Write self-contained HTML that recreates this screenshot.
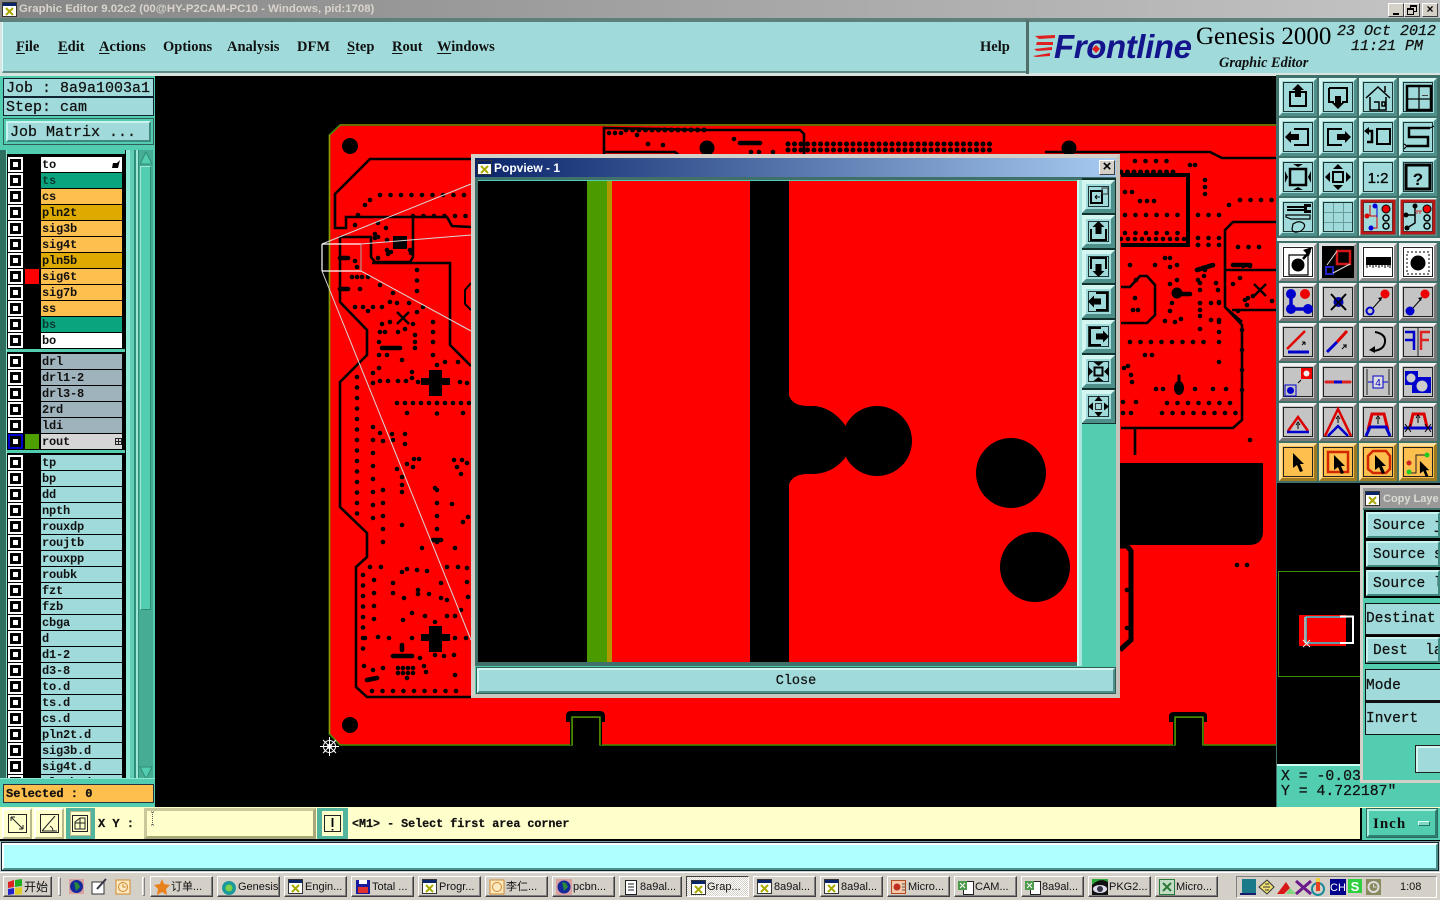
<!DOCTYPE html>
<html lang="en"><head><meta charset="utf-8"><title>Graphic Editor</title>
<style>
html,body{margin:0;padding:0;background:#000;width:1440px;height:900px;overflow:hidden}
body{position:relative;font-family:"Liberation Sans","Noto Sans CJK SC",sans-serif}
.a,.a *{box-sizing:border-box}
.a{position:absolute}
.mono{font-family:"Liberation Mono",monospace;-webkit-text-stroke:.25px}
.menu{position:absolute;top:39px;font:bold 14.500px "Liberation Serif",serif;color:#111;white-space:pre}
.menu u{text-decoration-thickness:1px;text-underline-offset:2px}
.r{position:absolute;left:8px;width:115px;height:15px}
.r i{position:absolute;left:2px;top:2px;width:11px;height:11px;border:3px solid #000;background:#fff;outline:2px solid #fff;box-sizing:border-box}
.r s{position:absolute;left:17px;top:0;width:14px;height:15px;text-decoration:none}
.r b{position:absolute;left:33px;top:0;width:81px;height:15px;box-sizing:border-box;padding-left:1px;font:bold 12px/16px "Liberation Mono",monospace;letter-spacing:-.2px;color:#111;overflow:hidden;white-space:pre}
.y{background:#fdbf4d}.g{background:#deaa00}.e{background:#0aa57f;color:#0b3b30!important}.w{background:#fff}.q{background:#9fb3bd}.t2{background:#a0dada}
.bev{border:2px solid;border-color:#c9f3ee #3f8a80 #3f8a80 #c9f3ee}
.tb{position:absolute;top:876px;width:63px;height:21px;box-sizing:border-box;background:#d4d0c8;border:1px solid;border-color:#fff #404040 #404040 #fff;box-shadow:inset -1px -1px 0 #808080;font-size:11px;line-height:20px;color:#111;white-space:nowrap;overflow:hidden;padding-left:20px}
.tb svg{position:absolute;left:3px;top:2px}
.cp{position:absolute;left:1366px;width:74px;box-sizing:border-box;background:#a0dada;font:14.500px "Liberation Mono",monospace;-webkit-text-stroke:.25px;color:#111;white-space:pre;overflow:hidden}
.d{fill:none;stroke:#000;stroke-linecap:round;stroke-width:4.600;stroke-dasharray:0 10.5}
.t{fill:none;stroke:#000;stroke-width:2.600}
.p{fill:none;stroke:#000;stroke-linecap:round;stroke-width:4.600}
.k{fill:none;stroke:#000;stroke-width:2}
.k1{fill:none;stroke:#000;stroke-width:1.200}
.ol{fill:none;stroke:#d8d8d8;stroke-width:1}
</style></head><body>

<svg width="0" height="0" style="position:absolute">
<defs>
<symbol id="bt" viewBox="0 0 38 38"><rect width="38" height="38" fill="#a0dada"/><path d="M0 0h38l-3 3H3v32l-3 3z" fill="#d4f6f1"/><path d="M38 38H0l3-3h32V3l3-3z" fill="#4f8f8a"/><rect x="4.500" y="4.500" width="29" height="29" fill="none" stroke="#1c3432"/></symbol>
<symbol id="bg" viewBox="0 0 38 38"><rect width="38" height="38" fill="#c4c4c4"/><path d="M0 0h38l-3 3H3v32l-3 3z" fill="#f0f0f0"/><path d="M38 38H0l3-3h32V3l3-3z" fill="#777"/><rect x="4.500" y="4.500" width="29" height="29" fill="none" stroke="#222"/></symbol>
<symbol id="bw" viewBox="0 0 38 38"><rect width="38" height="38" fill="#fff"/><path d="M38 38H0l3-3h32V3l3-3z" fill="#8a8a8a"/><path d="M0 0h38l-3 3H3v32l-3 3z" fill="#eee"/><rect x="4.500" y="4.500" width="29" height="29" fill="none" stroke="#222"/></symbol>
<symbol id="by" viewBox="0 0 38 38"><rect width="38" height="38" fill="#fdbf4d"/><path d="M0 0h38l-3 3H3v32l-3 3z" fill="#ffe09c"/><path d="M38 38H0l3-3h32V3l3-3z" fill="#a07a20"/><rect x="4.500" y="4.500" width="29" height="29" fill="none" stroke="#222"/></symbol>
<symbol id="pb" viewBox="0 0 33 33"><rect width="33" height="33" fill="#a0dada"/><path d="M0 0h33l-4 4H4v25l-4 4z" fill="#d4f6f1"/><path d="M33 33H0l4-4h25V4l4-4z" fill="#4f8f8a"/><rect x="6.500" y="6.500" width="20" height="20" fill="none" stroke="#1c3432"/></symbol>
<symbol id="xw" viewBox="0 0 15 15"><rect x=".5" y=".5" width="14" height="14" fill="#fff" stroke="#333"/><rect x="1" y="1" width="13" height="3" fill="#0a246a"/><path d="M4 6l7 7M11 6l-7 7" stroke="#a9a900" stroke-width="2"/></symbol>
<symbol id="pt" viewBox="0 0 14 20"><path d="M1 1l11 11H8l3 7-3 1-3-7-4 3z" fill="#000"/></symbol>
</defs>
</svg>

<!-- PCB canvas -->
<svg class="a" style="left:0;top:0" width="1440" height="900" viewBox="0 0 1440 900">
<rect width="1440" height="900" fill="#000"/>
<path d="M340 124H1276V745H340L329 734V135z" fill="#ff0000"/>
<path d="M1276 125H340L329.500 135V734L340 745H572V717H600V745H1175V717H1203V745H1276" fill="none" stroke="#3f8f00" stroke-width="1.600"/>
<path d="M329.500 135V734" stroke="#8f9a00" stroke-width="1.400"/>
<!-- notches -->
<path d="M566 716q0-5 5-5h29q5 0 5 5v6h-3V745h-2V717H572V745h-2V722h-4z" fill="#000"/>
<rect x="573" y="718" width="26" height="27" fill="#000"/>
<path d="M1169 716q0-4 5-4h29q4 0 4 4v6h-3V745h-1V717h-28V745h-2V722h-4z" fill="#000"/>
<rect x="1176" y="718" width="26" height="27" fill="#000"/>
<path d="M1203 745V717H1175V745" fill="none" stroke="#3f8f00" stroke-width="1.600"/>
<path d="M600 745V717H572V745" fill="none" stroke="#3f8f00" stroke-width="1.600"/>
<!-- holes -->
<circle cx="350" cy="146" r="8"/><circle cx="350" cy="725" r="8"/><circle cx="707" cy="148" r="7.500"/><circle cx="1069" cy="148" r="7.500"/>
<!-- big cutout -->
<path d="M1119 463H1263V531q0 14-14 14H1119z" fill="#000"/>
<!-- traces left -->
<path class="t" d="M471 159H370L335 194V228H346V217H447L452 226L471 227"/>
<path class="t" d="M413 217V257L410 262H375L371 257V237H340V302L367 330V355L340 382V507L367 533V557L356 567V687L367 697H471"/>
<path class="t" d="M372 263H450V345L471 366"/>
<path class="t" d="M604 154V128L708 130H800L804 134V154"/>
<path class="t" d="M604 152H675L680 156"/>
<path class="t" d="M1045 152H1210L1222 158H1276"/>
<path class="t" style="stroke-width:2" d="M471 283L465 290V304L471 310"/>
<!-- traces right -->
<path class="t" style="stroke-width:4" d="M1121 175H1188V245H1121"/>
<path class="t" d="M1121 287H1130L1140 276H1147L1155 285V315L1147 323H1121"/>
<path class="t" d="M1276 222H1233L1225 230V307L1242 325V420L1233 428H1121"/>
<path class="t" d="M1225 270H1276M1227 309L1242 322M1135 428V455"/>
<path class="t" style="stroke-width:5" d="M1120 546H1127L1131 551V640L1120 650"/>
<path class="t" d="M1276 310H1232"/>
<!-- pads -->
<rect x="393" y="236" width="14" height="13"/>
<path d="M429 370h13v8h8v7h-8v11h-13v-11h-8v-7h8z"/>
<path d="M429 626h13v8h8v7h-8v11h-13v-11h-8v-7h8z"/>
<circle cx="1177" cy="293" r="5.500"/><path class="p" d="M1180 294H1190"/>
<ellipse cx="1179" cy="388" rx="5" ry="7"/><path class="p" style="stroke-width:3" d="M1179 376V384"/>
<path d="M397 312l12 12M409 312l-12 12M1254 284l12 12M1266 284l-12 12" stroke="#000" stroke-width="2.400"/>
<!-- dotted lines -->
<path class="d" d="M380 195H470M413 216H470M417 270V292M357 377V520M437 403V420M363 575V653M372 691H465"/>
<path class="d" style="stroke-dasharray:0 13" d="M373 427V520M383 490V553M374 580V630M437 490V548"/>
<path class="d" style="stroke-dasharray:0 8" d="M397 403H470"/>
<path class="d" style="stroke-dasharray:0 6.500;stroke-width:5" d="M788 144H990M788 150H990M626 130H705M1121 172H1176"/>
<path class="d" d="M1135 161H1176M1125 215H1178M1125 233H1178M1198 215H1220M1198 238H1226M1198 245H1226M1130 342H1204M1167 403H1231M1162 413H1236M1240 200H1272M1238 247H1265"/>
<path class="d" style="stroke-dasharray:0 7;stroke-width:4.600" d="M1121 239H1186M1205 180V197M1140 201H1158M1145 355H1158M1243 266H1256"/>
<path class="d" style="stroke-dasharray:0 20" d="M1219 302V370M1200 290V330M1242 330V410"/>
<path class="d" style="stroke-dasharray:0 13" d="M1213 389H1236"/>
<path class="p" d="M340 258H348M340 289H348M382 348H400M433 540H441M393 656H412M402 645V650M367 680L377 678M740 143H760M1197 270L1213 265M1233 265H1250"/>
<path class="p" d="M355 225h0M358 215h0M378 223h0M386 228h0M375 234h0M375 238h0M378 237h0M387 240h0M387 250h0M388 254h0M391 252h0M378 258h0M411 253h0M410 250h0M355 261h0M357 267h0M352 277h0M357 277h0M362 277h0M368 277h0M360 289h0M380 285h0M393 293h0M355 307h0M363 307h0M368 311h0M373 307h0M382 307h0M390 302h0M397 303h0M409 303h0M417 312h0M423 307h0M382 324h0M390 322h0M413 324h0M433 322h0M433 332h0M433 342h0M433 355h0M415 335h0M415 342h0M415 348h0M380 332h0M385 332h0M398 332h0M405 329h0M379 342h0M379 355h0M387 355h0M402 360h0M379 368h0M373 373h0M373 383h0M380 381h0M388 381h0M398 381h0M406 381h0M412 372h0M412 378h0M418 382h0M445 362h0M458 362h0M437 365h0M460 382h0M467 383h0M407 413h0M463 413h0M380 433h0M392 434h0M405 434h0M383 441h0M405 444h0M393 440h0M414 459h0M419 459h0M407 464h0M413 467h0M397 469h0M402 477h0M402 485h0M402 492h0M435 488h0M452 504h0M454 460h0M462 460h0M467 463h0M457 467h0M461 474h0M463 522h0M468 517h0M455 548h0M422 548h0M402 525h0M370 567h0M381 567h0M402 572h0M407 569h0M417 570h0M427 571h0M447 567h0M458 567h0M467 568h0M393 583h0M393 593h0M404 598h0M418 590h0M418 594h0M429 594h0M441 598h0M447 600h0M441 583h0M467 582h0M468 597h0M461 610h0M447 616h0M455 616h0M425 616h0M412 613h0M403 620h0M435 622h0M455 638h0M466 638h0M412 638h0M389 638h0M378 637h0M365 638h0M435 655h0M444 656h0M454 655h0M420 658h0M424 666h0M426 672h0M455 675h0M364 666h0M383 668h0M373 670h0M398 668h0M403 668h0M408 668h0M413 668h0M398 673h0M403 673h0M408 673h0M413 673h0M407 678h0M370 200h0M365 205h0M609 133h0M615 133h0M621 133h0M637 135h0M648 144h0M663 145h0M734 139h0M751 152h0M759 152h0M773 152h0M1125 192h0M1132 192h0M1190 165h0M1195 165h0M1229 205h0M1198 245h0M1155 265h0M1165 258h0M1170 258h0M1130 265h0M1170 267h0M1177 265h0M1136 280h0M1135 298h0M1133 310h0M1138 310h0M1170 284h0M1177 280h0M1172 303h0M1170 311h0M1165 321h0M1175 322h0M1181 319h0M1198 280h0M1205 270h0M1204 276h0M1200 283h0M1216 283h0M1218 290h0M1200 303h0M1211 303h0M1219 303h0M1200 316h0M1211 320h0M1219 320h0M1200 329h0M1219 332h0M1233 284h0M1240 278h0M1245 300h0M1248 298h0M1253 296h0M1247 305h0M1272 301h0M1238 311h0M1124 368h0M1128 366h0M1131 375h0M1132 382h0M1163 389h0M1156 389h0M1195 389h0M1123 402h0M1136 402h0M1123 413h0M1131 413h0M1237 565h0M1247 565h0M1250 440h0M1127 590h0M1127 628h0"/>
<!-- overlay lines -->
<path class="ol" d="M322 244L471 184M361 244L471 235M361 271L471 331M322 271L471 640"/>
<path d="M322 244H361M322 271H361M322 244V271" fill="none" stroke="#fff" stroke-width="1.200"/>
<path d="M361 244V271" fill="none" stroke="#aaa"/>
<!-- crosshair cursor -->
<g stroke="#fff" fill="none"><circle cx="329.500" cy="746.500" r="6"/><circle cx="329.500" cy="746.500" r="2"/><path d="M329.500 737V756M320 746.500H339M323 740L336 753M336 740L323 753"/></g>
<!-- minimap -->
<rect x="1277" y="483" width="84" height="281" fill="#000"/>
<path d="M1361 571.500H1278.500V676.500H1361" fill="none" stroke="#3f8f00"/>
<rect x="1299" y="615" width="47" height="31" fill="#f00"/>
<path d="M1347 617H1306V643H1347" fill="none" stroke="#30d0e0" stroke-width="1.600"/>
<path d="M1340 616.500H1353V643H1340" fill="none" stroke="#fff" stroke-width="2"/>
<path d="M1305 617V643" stroke="#aaa" stroke-width="2"/>
<path d="M1303 640l7 7M1310 640l-7 7" stroke="#eee"/>
</svg>

<!-- title bar -->
<div class="a" style="left:0;top:0;width:1440px;height:18px;background:linear-gradient(90deg,#868686,#c4c4c4)"></div>
<svg class="a" style="left:2px;top:2px" width="15" height="15"><use href="#xw"/></svg>
<div class="a" style="left:19px;top:2px;font:bold 11.400px/15px 'Liberation Sans',sans-serif;color:#d8d4cc;white-space:pre">Graphic Editor 9.02c2 (00@HY-P2CAM-PC10 - Windows, pid:1708)</div>
<div class="a" style="left:1388px;top:3px;width:16px;height:14px;background:#d4d0c8;border:1px solid;border-color:#fff #404040 #404040 #fff"><div class="a" style="left:4px;top:9px;width:6px;height:2px;background:#000"></div></div>
<div class="a" style="left:1404px;top:3px;width:16px;height:14px;background:#d4d0c8;border:1px solid;border-color:#fff #404040 #404040 #fff"><div class="a" style="left:5px;top:1px;width:7px;height:7px;border:1px solid #000;border-top-width:2px"></div><div class="a" style="left:2px;top:4px;width:7px;height:7px;border:1px solid #000;border-top-width:2px;background:#d4d0c8"></div></div>
<div class="a" style="left:1422px;top:3px;width:16px;height:14px;background:#d4d0c8;border:1px solid;border-color:#fff #404040 #404040 #fff;font:bold 12px/11px 'Liberation Sans';text-align:center;color:#000">×</div>

<!-- menu bar -->
<div class="a" style="left:0;top:18px;width:1440px;height:58px;background:#d8e4e0"></div>
<div class="a" style="left:0;top:18px;width:1440px;height:4px;background:#5f7f7a"></div>
<div class="a" style="left:2px;top:22px;width:1024px;height:51px;background:#a0dada;border-bottom:2px solid #5f8a88;border-left:1px solid #dff"></div>
<div class="a" style="left:1026px;top:20px;width:3px;height:54px;background:#4f6f6a"></div>
<div class="a" style="left:1029px;top:22px;width:411px;height:51px;background:#a0dada"></div>
<span class="menu" style="left:16px"><u>F</u>ile</span>
<span class="menu" style="left:58px"><u>E</u>dit</span>
<span class="menu" style="left:99px"><u>A</u>ctions</span>
<span class="menu" style="left:163px">Options</span>
<span class="menu" style="left:227px">Analysis</span>
<span class="menu" style="left:297px">DFM</span>
<span class="menu" style="left:347px"><u>S</u>tep</span>
<span class="menu" style="left:392px"><u>R</u>out</span>
<span class="menu" style="left:437px"><u>W</u>indows</span>
<span class="menu" style="left:980px">Help</span>
<!-- logo -->
<svg class="a" style="left:1030px;top:30px" width="30" height="30"><path d="M5 6L25 5V8L9 9zM7 12H23V15H6zM4 19L22 17V20L7 21zM3 26L20 23V26L6 27z" fill="#e02020"/></svg>
<div class="a" style="left:1054px;top:29px;font:italic bold 33px/36px 'Liberation Sans',sans-serif;letter-spacing:-.4px;color:#14148c;white-space:pre">Frontline</div>
<svg class="a" style="left:1091px;top:44px" width="10" height="10"><path d="M5 1l4 4-4 4-4-4z" fill="#e02020"/></svg>
<div class="a" style="left:1196px;top:22px;font:25px/30px 'Liberation Serif',serif;color:#000;white-space:pre">Genesis 2000</div>
<div class="a" style="left:1219px;top:55px;font:italic bold 14.300px/16px 'Liberation Serif',serif;color:#111;white-space:pre">Graphic Editor</div>
<div class="a mono" style="left:1337px;top:23px;font:italic 15px/17px 'Liberation Mono',monospace;color:#111;white-space:pre">23 Oct 2012</div>
<div class="a mono" style="left:1351px;top:38px;font:italic 15px/17px 'Liberation Mono',monospace;color:#111;white-space:pre">11:21 PM</div>

<!-- left panel -->
<div class="a" style="left:0;top:76px;width:155px;height:731px;background:#52cdb0"></div>
<div class="a mono" style="left:3px;top:78px;width:151px;height:19px;background:#a0dada;border:1px solid #123;font-size:15px;line-height:19px;padding-left:2px;color:#111;white-space:pre">Job : 8a9a1003a1</div>
<div class="a mono" style="left:3px;top:97px;width:151px;height:19px;background:#a0dada;border:1px solid #123;font-size:15px;line-height:19px;padding-left:2px;color:#111;white-space:pre">Step: cam</div>
<div class="a" style="left:3px;top:118px;width:151px;height:27px;border:1px solid #2f5f58;padding:2px"><div class="bev mono" style="height:21px;background:#a0dada;font-size:15px;line-height:19px;padding-left:2px;color:#111;white-space:pre">Job Matrix ...</div></div>
<!-- list frame -->
<div class="a" style="left:0;top:150px;width:6px;height:632px;background:#2f6f62"></div>
<div class="a" style="left:6px;top:150px;width:1px;height:632px;background:#8fe0cf"></div>
<div class="a" style="left:7px;top:154px;width:118px;height:625px;background:#000;overflow:hidden"></div>
<div class="a" style="left:125px;top:150px;width:13px;height:630px;background:linear-gradient(90deg,#000 0 1px,#8fe8d4 1px 5px,#60cdb4 5px 9px,#2e8f76 9px 11px,#9fe8d8 11px 13px)"></div>
<div class="a" style="left:138px;top:150px;width:15px;height:630px;background:#46ad93;border-left:1px solid #2e8f76"></div>
<div class="a" style="left:140px;top:166px;width:11px;height:444px;background:#52cdb0;border:1px solid;border-color:#9fe8d8 #2e8f76 #2e8f76 #9fe8d8"></div>
<svg class="a" style="left:139px;top:151px" width="14" height="14"><path d="M7 1L13 13H1z" fill="#52cdb0" stroke="#2e8f76"/></svg>
<svg class="a" style="left:139px;top:766px" width="14" height="14"><path d="M7 13L13 1H1z" fill="#52cdb0" stroke="#2e8f76"/></svg>
<div class="a" style="left:7px;top:349px;width:118px;height:3px;background:#52cdb0"></div>
<div class="a" style="left:7px;top:450px;width:118px;height:3px;background:#52cdb0"></div>

<div class="r" style="top:157px"><i></i><b class="w">to</b><svg class="a" style="left:104px;top:3px" width="9" height="9"><path d="M8 0L5 3H1L0 8H6z" fill="#000"/></svg></div>
<div class="r" style="top:173px"><i></i><b class="e">ts</b></div>
<div class="r" style="top:189px"><i></i><b class="y">cs</b></div>
<div class="r" style="top:205px"><i></i><b class="g">pln2t</b></div>
<div class="r" style="top:221px"><i></i><b class="y">sig3b</b></div>
<div class="r" style="top:237px"><i></i><b class="y">sig4t</b></div>
<div class="r" style="top:253px"><i></i><b class="g">pln5b</b></div>
<div class="r" style="top:269px"><i></i><s style="background:#f00"></s><b class="y">sig6t</b></div>
<div class="r" style="top:285px"><i></i><b class="y">sig7b</b></div>
<div class="r" style="top:301px"><i></i><b class="y">ss</b></div>
<div class="r" style="top:317px"><i></i><b class="e">bs</b></div>
<div class="r" style="top:333px"><i></i><b class="w">bo</b></div>

<div class="r" style="top:354px"><i></i><b class="q">drl</b></div>
<div class="r" style="top:370px"><i></i><b class="q">drl1-2</b></div>
<div class="r" style="top:386px"><i></i><b class="q">drl3-8</b></div>
<div class="r" style="top:402px"><i></i><b class="q">2rd</b></div>
<div class="r" style="top:418px"><i></i><b class="q">ldi</b></div>
<div class="r" style="top:434px"><i style="outline-color:#00c;border-color:#000"></i><s style="background:#4ea000"></s><b style="background:#d6d6d6">rout</b><svg class="a" style="left:107px;top:4px" width="7" height="7"><path d="M.5.5h6v6h-6zM3.500.5v6M.5 3.500h6" fill="none" stroke="#222"/></svg></div>

<div class="r" style="top:455px"><i></i><b class="t2">tp</b></div>
<div class="r" style="top:471px"><i></i><b class="t2">bp</b></div>
<div class="r" style="top:487px"><i></i><b class="t2">dd</b></div>
<div class="r" style="top:503px"><i></i><b class="t2">npth</b></div>
<div class="r" style="top:519px"><i></i><b class="t2">rouxdp</b></div>
<div class="r" style="top:535px"><i></i><b class="t2">roujtb</b></div>
<div class="r" style="top:551px"><i></i><b class="t2">rouxpp</b></div>
<div class="r" style="top:567px"><i></i><b class="t2">roubk</b></div>
<div class="r" style="top:583px"><i></i><b class="t2">fzt</b></div>
<div class="r" style="top:599px"><i></i><b class="t2">fzb</b></div>
<div class="r" style="top:615px"><i></i><b class="t2">cbga</b></div>
<div class="r" style="top:631px"><i></i><b class="t2">d</b></div>
<div class="r" style="top:647px"><i></i><b class="t2">d1-2</b></div>
<div class="r" style="top:663px"><i></i><b class="t2">d3-8</b></div>
<div class="r" style="top:679px"><i></i><b class="t2">to.d</b></div>
<div class="r" style="top:695px"><i></i><b class="t2">ts.d</b></div>
<div class="r" style="top:711px"><i></i><b class="t2">cs.d</b></div>
<div class="r" style="top:727px"><i></i><b class="t2">pln2t.d</b></div>
<div class="r" style="top:743px"><i></i><b class="t2">sig3b.d</b></div>
<div class="r" style="top:759px"><i></i><b class="t2">sig4t.d</b></div>
<div class="r" style="top:775px;height:3px;overflow:hidden"><i></i><b class="t2">pln5b.d</b></div>
<div class="a" style="left:0;top:778px;width:155px;height:29px;background:#52cdb0;border-top:1px solid #8fe8d4"></div>
<div class="a mono" style="left:3px;top:784px;width:151px;height:19px;background:#fdbf4d;border:1px solid #234;font-weight:bold;font-size:12px;line-height:19px;padding-left:2px;color:#111;white-space:pre">Selected : 0</div>

<!-- right toolbars -->
<div class="a" style="left:1276px;top:75px;width:164px;height:408px;background:#40706a"></div>
<div class="a" style="left:1276px;top:238px;width:164px;height:3px;background:#e8f0ee"></div>
<svg class="a" style="left:0;top:0" width="1440" height="900" viewBox="0 0 1440 900">
<g font-family="Liberation Sans,sans-serif">
<!-- row1 -->
<g transform="translate(1279,78)"><use href="#bt" width="38" height="38"/><path class="k" d="M11 14H27V28H11z"/><path d="M19 6l6 6h-3v7h-6v-7h-3z"/></g>
<g transform="translate(1319,78)"><use href="#bt" width="38" height="38"/><path class="k" d="M10 10H28V24H23M15 24H10V10"/><path d="M16 18h6v7h3l-6 6-6-6h3z"/></g>
<g transform="translate(1359,78)"><use href="#bt" width="38" height="38"/><path class="k1" style="stroke-width:1.500" d="M7 20L19 9L31 20M11 19V32H27V19M15 24H20V32M23 24H26V28H23zM26 8V14"/></g>
<g transform="translate(1399,78)"><use href="#bt" width="38" height="38"/><path class="k" style="stroke-width:2.500" d="M8 8H32V32H8z"/><path class="k1" d="M8 21H32M20 8V32"/><path d="M23 17h6v1h-6z" fill="#444"/></g>
<!-- row2 -->
<g transform="translate(1279,118)"><use href="#bt" width="38" height="38"/><path class="k" d="M15 11H29V27H15"/><path d="M6 19l6-6v3h8v6h-8v3z"/></g>
<g transform="translate(1319,118)"><use href="#bt" width="38" height="38"/><path class="k" d="M23 11H9V27H23"/><path d="M32 19l-6-6v3h-8v6h8v3z"/></g>
<g transform="translate(1359,118)"><use href="#bt" width="38" height="38"/><path class="k" d="M18 11H31V26H18z"/><path class="k" style="stroke-width:2.500" d="M8 13H13V24H8"/><path d="M5 13l5-4v8z"/></g>
<g transform="translate(1399,118)"><use href="#bt" width="38" height="38"/><path class="k" style="stroke-width:2.500" d="M31 10H10V19H29V28H8"/><path class="k1" d="M31 10L35 8M8 28L5 26M8 28L5 31"/></g>
<!-- row3 -->
<g transform="translate(1279,158)"><use href="#bt" width="38" height="38"/><path class="k" style="stroke-width:2.500" d="M11 11H27V27H11z"/><path d="M19 9l-5-3h10zM19 29l-5 3h10zM9 19l-3-6v12zM29 19l3-6v12z"/></g>
<g transform="translate(1319,158)"><use href="#bt" width="38" height="38"/><path class="k" d="M14 14H24V24H14z"/><path d="M19 6l-5 5h10zM19 32l-5-5h10zM6 19l5-5v10zM32 19l-5-5v10z"/></g>
<g transform="translate(1359,158)"><use href="#bt" width="38" height="38"/><text x="19" y="25" text-anchor="middle" font-size="15" fill="#000" stroke="#000" stroke-width=".3">1:2</text></g>
<g transform="translate(1399,158)"><use href="#bt" width="38" height="38"/><path class="k" style="stroke-width:3" d="M7 7H31V31H7z"/><text x="19" y="27" text-anchor="middle" font-size="17" font-weight="bold" fill="#000">?</text></g>
<!-- row4 -->
<g transform="translate(1279,198)"><use href="#bt" width="38" height="38"/><path class="k" d="M8 9H25M8 12H25"/><path d="M25 6h7v3h-4v3h4v3h-7z"/><path class="k1" d="M7 17H31V21H12L7 19zM14 26q6-4 10-1t-2 8q-8 3-9-2z"/></g>
<g transform="translate(1319,198)"><use href="#bt" width="38" height="38"/><path d="M14.500 5V33M24.500 5V33M5 14.500H33M5 24.500H33" stroke="#6b9c9c" fill="none"/></g>
<g transform="translate(1359,198)"><use href="#bt" width="38" height="38"/><rect x="3" y="3" width="32" height="32" fill="none" stroke="#b81818" stroke-width="3"/><path d="M11 7V18M11 18H18V30H13" stroke="#d00" fill="none"/><path d="M18 19V8" stroke="#00d" fill="none"/><circle cx="8" cy="18" r="2.500" fill="#d00"/><circle cx="16" cy="8" r="2.500" fill="#00d"/><circle cx="12" cy="30" r="2.500" fill="#00d"/><circle cx="27" cy="11" r="4" fill="#e00" stroke="#000"/><circle cx="27" cy="20" r="3" fill="none" stroke="#000" stroke-width="1.500"/><circle cx="27" cy="28" r="3" fill="none" stroke="#000" stroke-width="1.500"/></g>
<g transform="translate(1399,198)"><use href="#bt" width="38" height="38"/><rect x="3" y="3" width="32" height="32" fill="none" stroke="#b81818" stroke-width="3"/><path d="M16 8V25L8 30M7 17H16" stroke="#000" fill="none" stroke-width="1.500"/><path d="M16 13H23M18 13v3M21 13v3" stroke="#c33" fill="none"/><circle cx="16" cy="8" r="2.500"/><circle cx="7" cy="17" r="2.500"/><circle cx="8" cy="30" r="2.500"/><circle cx="28" cy="11" r="4" fill="#e00" stroke="#000"/><circle cx="28" cy="20" r="3" fill="none" stroke="#000" stroke-width="1.500"/><circle cx="28" cy="28" r="3" fill="none" stroke="#000" stroke-width="1.500"/></g>
<!-- group 2 row 1 -->
<g transform="translate(1279,243)"><use href="#bw" width="38" height="38"/><path class="k1" d="M10 12H29V32H10z"/><circle cx="19" cy="22" r="6.500"/><path class="k" style="stroke-width:2.500" d="M24 16L31 8"/><path d="M33 4L24 7l6 6z"/></g>
<g transform="translate(1319,243)"><rect width="38" height="38" fill="#000"/><path d="M0 0h38l-3 3H3v32l-3 3z" fill="#ddd"/><path d="M38 38H0l3-3h32V3l3-3z" fill="#888"/><rect x="18" y="8" width="13" height="13" fill="none" stroke="#d21818" stroke-width="2.500"/><rect x="7" y="24" width="7" height="7" fill="none" stroke="#22c" stroke-width="2"/><path d="M8 22L18 8M14 30L31 21" stroke="#ddd"/></g>
<g transform="translate(1359,243)"><use href="#bw" width="38" height="38"/><rect x="7" y="14" width="25" height="8"/><path d="M8 22v3M11 22v2M14 22v3M17 22v2M20 22v3M23 22v2M26 22v3M29 22v2M31 22v3" stroke="#000"/></g>
<g transform="translate(1399,243)"><use href="#bw" width="38" height="38"/><path d="M8 9H30V31H8z" fill="none" stroke="#000" stroke-dasharray="2 2"/><circle cx="19" cy="20" r="7.500"/></g>
<!-- row 2 -->
<g transform="translate(1279,283)"><use href="#bg" width="38" height="38"/><path d="M12 11V26H29" stroke="#00c" stroke-width="3.500" fill="none"/><circle cx="12" cy="11" r="5" fill="#00c"/><circle cx="12" cy="26" r="5" fill="#00c"/><circle cx="29" cy="26" r="5" fill="#00c"/><circle cx="26" cy="11" r="5" fill="#e00"/></g>
<g transform="translate(1319,283)"><use href="#bg" width="38" height="38"/><path d="M12 11L27 27M27 11L12 27" stroke="#000" stroke-width="2"/><circle cx="19.500" cy="19" r="5" fill="#00a"/><path d="M15 15l9 9M24 15l-9 9" stroke="#000" stroke-width="1.500"/></g>
<g transform="translate(1359,283)"><use href="#bg" width="38" height="38"/><circle cx="11" cy="28" r="3.500" fill="none" stroke="#00c" stroke-width="2"/><circle cx="26" cy="11" r="4.500" fill="#e00"/><path d="M14 25L22 16" stroke="#000"/><path d="M23 14l-4 1 3 3z"/></g>
<g transform="translate(1399,283)"><use href="#bg" width="38" height="38"/><circle cx="11" cy="28" r="4.500" fill="#00c"/><circle cx="26" cy="11" r="4.500" fill="#e00"/><path d="M14 25L22 16" stroke="#000"/><path d="M23 14l-4 1 3 3z"/></g>
<!-- row 3 -->
<g transform="translate(1279,323)"><use href="#bg" width="38" height="38"/><path d="M8 26L26 8" stroke="#d00" stroke-width="2.500"/><path d="M9 29H30" stroke="#00c" stroke-width="3"/><path d="M23 22l3-3M26 19l-3 0M26 19l0 3" stroke="#000"/></g>
<g transform="translate(1319,323)"><use href="#bg" width="38" height="38"/><path d="M8 29L18 19" stroke="#00c" stroke-width="3"/><path d="M18 19L28 8" stroke="#d00" stroke-width="3"/><path d="M23 26l4-4-3 0M27 22l0 3" stroke="#000" fill="none"/></g>
<g transform="translate(1359,323)"><use href="#bg" width="38" height="38"/><path class="k" d="M16 9Q27 11 26 19T14 28"/><path d="M10 27l6-4v7z"/></g>
<g transform="translate(1399,323)"><use href="#bg" width="38" height="38"/><path d="M6 9H15V27M6 17H15" fill="none" stroke="#00c" stroke-width="2.500"/><path d="M31 9H22V27M22 17H30" fill="none" stroke="#d22" stroke-width="2.500"/><path d="M19 5V33" stroke="#222"/></g>
<!-- row 4 -->
<g transform="translate(1279,363)"><use href="#bg" width="38" height="38"/><rect x="22" y="5" width="11" height="11" fill="#e00"/><circle cx="27.500" cy="10.500" r="3" fill="#eee"/><rect x="6" y="22" width="11" height="11" fill="none" stroke="#00c"/><circle cx="11.500" cy="27.500" r="3.500" fill="#00c"/><path d="M19 20l3-3" stroke="#000"/></g>
<g transform="translate(1319,363)"><use href="#bg" width="38" height="38"/><path d="M7 19H31" stroke="#d22" stroke-width="3" stroke-linecap="round"/><path d="M15 19H23" stroke="#00c" stroke-width="3"/></g>
<g transform="translate(1359,363)"><use href="#bg" width="38" height="38"/><path d="M8 6V32M30 6V32" stroke="#222"/><path d="M9 19H29" stroke="#00c"/><rect x="14" y="13" width="10" height="12" fill="#ddd" stroke="#00c"/><text x="19" y="23" text-anchor="middle" font-size="10" fill="#00c">4</text></g>
<g transform="translate(1399,363)"><use href="#bg" width="38" height="38"/><path d="M6 8H19V14H32V30H13V22H6z" fill="#00c"/><circle cx="12" cy="15" r="4.500" fill="#ccc"/><circle cx="23" cy="23" r="5.500" fill="#ccc"/></g>
<!-- row 5 -->
<g transform="translate(1279,403)"><use href="#bg" width="38" height="38"/><path d="M9 28L19 14L29 28" fill="none" stroke="#d00" stroke-width="2.500"/><path d="M8 29H30" stroke="#00c" stroke-width="2.500"/><path d="M19 26V21M17 22l2-3 2 3" stroke="#000" fill="none"/></g>
<g transform="translate(1319,403)"><use href="#bg" width="38" height="38"/><path d="M6 33L19 6L32 33" fill="none" stroke="#d00" stroke-width="2.500"/><path d="M9 33L19 23L29 33" fill="none" stroke="#00c" stroke-width="2.500"/><path d="M19 20V15M17 16l2-3 2 3" stroke="#000" fill="none"/></g>
<g transform="translate(1359,403)"><use href="#bg" width="38" height="38"/><path d="M9 27L13 11H25L29 27" fill="none" stroke="#d00" stroke-width="3"/><path d="M7 33L11 24H27L31 33" fill="none" stroke="#00c" stroke-width="3"/><path d="M19 21V15M17 16l2-3 2 3" stroke="#000" fill="none"/></g>
<g transform="translate(1399,403)"><use href="#bg" width="38" height="38"/><path d="M11 24L14 11H25L28 24" fill="none" stroke="#d00" stroke-width="3"/><path d="M5 25H33" stroke="#00c" stroke-width="3"/><path d="M6 21l6 8M12 21l-6 8M26 21l6 8M32 21l-6 8" stroke="#000"/><path d="M19 20V14M17 15l2-3 2 3" stroke="#000" fill="none"/></g>
<!-- row 6 -->
<g transform="translate(1279,443)"><use href="#by" width="38" height="38"/><use href="#pt" x="13" y="9" width="14" height="20"/></g>
<g transform="translate(1319,443)"><use href="#by" width="38" height="38"/><rect x="9" y="9" width="20" height="20" fill="none" stroke="#d22800" stroke-width="2.500"/><use href="#pt" x="14" y="11" width="14" height="20"/></g>
<g transform="translate(1359,443)"><use href="#by" width="38" height="38"/><path d="M14 8H27L31 13V26L27 30H14L9 26V13z" fill="none" stroke="#d22800" stroke-width="2.500"/><use href="#pt" x="15" y="11" width="14" height="20"/></g>
<g transform="translate(1399,443)"><use href="#by" width="38" height="38"/><path d="M9 30H17V12H27" fill="none" stroke="#222"/><circle cx="10" cy="29" r="2.500" fill="#2c2"/><circle cx="10" cy="20" r="2.500" fill="#c22"/><circle cx="28" cy="12" r="2.500" fill="#2c2"/><use href="#pt" x="20" y="17" width="12" height="17"/></g>
</g>
</svg>

<!-- XY readout -->
<div class="a" style="left:1277px;top:764px;width:163px;height:43px;background:#52cdb0;border-top:2px solid #cfe"></div>
<div class="a mono" style="left:1281px;top:770px;font-size:14.800px;line-height:15px;color:#111;white-space:pre">X = -0.03
Y = 4.722187"</div>
<div class="a" style="left:1276px;top:76px;width:1px;height:732px;background:#40706a"></div>

<!-- copy layer dialog -->
<div class="a" style="left:1360px;top:485px;width:80px;height:298px;background:#52cdb0;border:3px solid #d4d0c8;border-right:0"></div>
<div class="a" style="left:1363px;top:488px;width:77px;height:20px;background:#999"></div>
<svg class="a" style="left:1365px;top:491px" width="15" height="15"><use href="#xw"/></svg>
<div class="a" style="left:1383px;top:492px;font:bold 11px/14px 'Liberation Sans',sans-serif;color:#dcdcd4;white-space:pre">Copy Laye</div>
<div class="a" style="left:1363px;top:508px;width:77px;height:2px;background:#40706a"></div>
<div class="a" style="left:1364px;top:510px;width:76px;height:88px;background:#000"></div>
<div class="cp bev" style="top:512px;height:26px;padding-left:5px;line-height:24px">Source j</div>
<div class="cp bev" style="top:541px;height:26px;padding-left:5px;line-height:24px">Source s</div>
<div class="cp bev" style="top:570px;height:26px;padding-left:5px;line-height:24px">Source l</div>
<div class="a" style="left:1364px;top:598px;width:76px;height:4px;background:#52cdb0"></div>
<div class="cp" style="left:1365px;top:603px;width:75px;height:32px;line-height:31px;border:1px solid #111;border-right:0">Destinat</div>
<div class="a" style="left:1365px;top:635px;width:75px;height:29px;background:#000"></div>
<div class="cp bev" style="top:637px;height:26px;padding-left:5px;line-height:24px">Dest  la</div>
<div class="cp" style="left:1365px;top:669px;width:75px;height:33px;line-height:32px;border:1px solid #111;border-right:0;border-bottom-width:2px">Mode</div>
<div class="cp" style="left:1365px;top:702px;width:75px;height:33px;line-height:32px;border:1px solid #111;border-right:0">Invert</div>
<div class="a" style="left:1415px;top:745px;width:25px;height:28px;background:#a0dada;border:1px solid #222;border-right:0;box-shadow:inset 2px 2px 0 #d4f6f1"></div>

<!-- popview -->
<div class="a" style="left:471px;top:154px;width:649px;height:544px;background:#52cdb0;border:4px solid #d4d0c8;border-right-color:#c4c4bc;border-bottom-color:#c8c8c0"></div>
<div class="a" style="left:475px;top:158px;width:641px;height:19px;background:linear-gradient(90deg,#0a246a,#a6caf0)"></div>
<svg class="a" style="left:477px;top:160px" width="15" height="15"><use href="#xw"/></svg>
<div class="a" style="left:494px;top:161px;font:bold 12px/15px 'Liberation Sans',sans-serif;color:#fff;white-space:pre">Popview - 1</div>
<div class="a" style="left:1099px;top:160px;width:16px;height:15px;background:#d4d0c8;border:1px solid;border-color:#fff #404040 #404040 #fff;font:bold 15px/12px 'Liberation Sans';text-align:center;color:#000">×</div>
<div class="a" style="left:475px;top:177px;width:641px;height:3px;background:#40706a"></div>
<div class="a" style="left:475px;top:180px;width:3px;height:486px;background:#40706a"></div>
<svg class="a" style="left:478px;top:181px" width="599" height="481" viewBox="478 181 599 481">
<rect x="478" y="181" width="599" height="481" fill="#000"/>
<rect x="587" y="181" width="20" height="481" fill="#4b9b00"/>
<rect x="607" y="181" width="5" height="481" fill="#b09a00"/>
<rect x="612" y="181" width="138" height="481" fill="#f00"/>
<rect x="789" y="181" width="288" height="481" fill="#f00"/>
<circle cx="812" cy="440" r="34"/><circle cx="877" cy="441" r="35"/>
<path d="M785 395H789Q792 407 812 406Q832 407 845 425L850 441L845 458Q832 474 812 474Q792 473 789 485H785z"/>
<circle cx="1011" cy="473" r="35"/><circle cx="1035" cy="567" r="35"/>
</svg>
<div class="a" style="left:478px;top:662px;width:599px;height:4px;background:#40706a"></div>
<div class="a" style="left:1077px;top:180px;width:5px;height:486px;background:#a8e4dc;border-left:2px solid #cfe"></div>
<div class="a" style="left:1082px;top:178px;width:34px;height:246px;background:#12302c"></div>
<svg class="a" style="left:1082px;top:180px" width="34" height="246" viewBox="0 0 34 246">
<g transform="translate(0,0)"><use href="#pb" width="33" height="33"/><path d="M9 11H20V23H9z" fill="none" stroke="#000" stroke-width="2"/><path d="M20 8H26V14H20z" fill="none" stroke="#333"/><path d="M13 17h5M13 17l2-2M13 17l2 2" stroke="#000" fill="none"/></g>
<g transform="translate(0,35)"><use href="#pb" width="33" height="33"/><path d="M9 14V25H24V14" fill="none" stroke="#000" stroke-width="2"/><path d="M16.500 6l6 6h-3v7h-6v-7h-3z"/></g>
<g transform="translate(0,70)"><use href="#pb" width="33" height="33"/><path d="M9 19V8H24V19" fill="none" stroke="#000" stroke-width="2"/><path d="M16.500 27l6-6h-3v-7h-6v7h-3z"/></g>
<g transform="translate(0,105)"><use href="#pb" width="33" height="33"/><path d="M14 8H25V25H14" fill="none" stroke="#000" stroke-width="2"/><path d="M6 16.500l6-6v3h7v6h-7v3z"/></g>
<g transform="translate(0,140)"><use href="#pb" width="33" height="33"/><path d="M19 8H8V25H19" fill="none" stroke="#000" stroke-width="2"/><path d="M27 16.500l-6-6v3h-7v6h7v3z"/></g>
<g transform="translate(0,175)"><use href="#pb" width="33" height="33"/><path d="M12.500 12.500h8v8h-8z" fill="none" stroke="#000" stroke-width="2"/><path d="M16.500 11l-5-4h10zM16.500 22l-5 4h10zM11 16.500l-5-5v10zM22 16.500l5-5v10z"/></g>
<g transform="translate(0,210)"><use href="#pb" width="33" height="33"/><path d="M13.500 13.500h6v6h-6z" fill="none" stroke="#333"/><path d="M16.500 6l-4 5h8zM16.500 27l-4-5h8zM6 16.500l5-4v8zM27 16.500l-5-4v8z"/></g>
</svg>
<div class="a mono" style="left:477px;top:668px;width:638px;height:25px;background:#a0dada;border:2px solid;border-color:#d4f6f1 #4f8f8a #4f8f8a #d4f6f1;outline:1px solid #2f5f58;text-align:center;font-size:13.500px;line-height:23px;color:#111">Close</div>

<!-- command row -->
<div class="a" style="left:0;top:807px;width:1440px;height:33px;background:#ffffcc"></div>
<div class="a" style="left:0;top:839px;width:1440px;height:2px;background:#000"></div>
<div class="a" style="left:2px;top:808px;width:30px;height:31px;background:#ffffcc;border:2px solid;border-color:#fff #b8b88c #b8b88c #fff"></div>
<div class="a" style="left:34px;top:808px;width:30px;height:31px;background:#ffffcc;border:2px solid;border-color:#fff #b8b88c #b8b88c #fff"></div>
<div class="a" style="left:66px;top:808px;width:29px;height:31px;background:#52b49c"></div>
<div class="a" style="left:70px;top:811px;width:21px;height:25px;background:#ffffcc;border:1px solid #b8b88c"></div>
<div class="a" style="left:317px;top:808px;width:31px;height:31px;background:#52b49c"></div>
<div class="a" style="left:322px;top:811px;width:21px;height:25px;background:#ffffcc"></div>
<svg class="a" style="left:0;top:807px" width="350" height="33">
<rect x="8.500" y="7.500" width="18" height="18" fill="none" stroke="#222"/><path d="M11 10L23 22M11 10h4M11 10v4M23 22h-4M23 22v-4" stroke="#222" fill="none"/>
<rect x="40.500" y="7.500" width="18" height="18" fill="none" stroke="#222"/><path d="M42 24L55 9M42 24H57M50 19a6 6 0 0 1 3 5" stroke="#222" fill="none"/>
<rect x="72.500" y="8.500" width="15" height="16" fill="none" stroke="#222"/><path d="M75 22V15L80 11H85V22ZM75 16H85M80 11V22" stroke="#222" fill="none"/>
<rect x="324.500" y="8.500" width="16" height="16" fill="none" stroke="#222"/><path d="M332.500 11V20M332.500 22v1.500" stroke="#000" stroke-width="1.800"/>
<path d="M152.500 5v13M151 5h3M151 18h3" stroke="#555" stroke-dasharray="1 1"/>
</svg>
<div class="a mono" style="left:98px;top:817px;font-weight:bold;font-size:12px;line-height:14px;color:#111;white-space:pre">X Y :</div>
<div class="a" style="left:144px;top:808px;width:172px;height:31px;border:3px solid;border-color:#c8c89a #a8a878 #a8a878 #c8c89a"></div>
<div class="a mono" style="left:352px;top:817px;font-weight:bold;font-size:11.700px;line-height:14px;color:#111;white-space:pre">&lt;M1&gt; - Select first area corner</div>
<div class="a" style="left:1360px;top:808px;width:80px;height:32px;background:#52cdb0;border-left:2px solid #000"></div>
<div class="a" style="left:1367px;top:809px;width:70px;height:28px;background:#52cdb0;border:2px solid;border-color:#b4efe0 #2f7f70 #2f7f70 #b4efe0;outline:1px solid #2a6a5c;font:bold 15px/26px 'Liberation Serif',serif;letter-spacing:1px;color:#111;padding-left:4px">Inch</div>
<div class="a" style="left:1418px;top:821px;width:12px;height:5px;background:#7fd8c0;border:1px solid;border-color:#dff #276 #276 #dff"></div>

<!-- cyan row -->
<div class="a" style="left:0;top:841px;width:1440px;height:31px;background:#c8d4d2;border-top:1px solid #7a9a98"></div>
<div class="a" style="left:2px;top:843px;width:1436px;height:27px;background:#b0ffff;border:2px solid;border-color:#fff #4f8f8a #4f8f8a #fff;outline:1px solid #123"></div>

<!-- taskbar -->
<div class="a" style="left:0;top:872px;width:1440px;height:28px;background:#d4d0c8;border-top:1px solid #fff"></div>
<div class="tb" style="left:3px;width:49px;font-size:12px;padding-left:20px"><svg width="16" height="16"><path d="M1 3l6-2v7l-6 1z" fill="#d22"/><path d="M8 1l7-1v7l-7 1z" fill="#2a2"/><path d="M1 10l6-1v6l-6 1z" fill="#22c"/><path d="M8 9l7-1v7l-7 1z" fill="#dc2"/></svg>开始</div>
<div class="a" style="left:58px;top:877px;width:3px;height:19px;border:1px solid;border-color:#fff #808080 #808080 #fff"></div>
<svg class="a" style="left:68px;top:878px" width="66" height="18"><rect x="1" y="1" width="15" height="15" fill="#d9a0a0"/><circle cx="8.500" cy="8.500" r="6.500" fill="#14289c"/><path d="M6 4l4 1 2 4-4 4z" fill="#2a8a3a"/><rect x="24" y="4" width="12" height="12" fill="#fff" stroke="#333"/><path d="M29 11L38 1" stroke="#334" stroke-width="2"/><rect x="48" y="2" width="14" height="14" fill="#fce9c0" stroke="#d08a30"/><circle cx="55" cy="9" r="4.500" fill="none" stroke="#d08a30"/><path d="M55 6v3h3" fill="none" stroke="#d08a30"/></svg>
<div class="a" style="left:142px;top:877px;width:3px;height:19px;border:1px solid;border-color:#fff #808080 #808080 #fff"></div>
<div class="tb" style="left:150px"><svg width="16" height="16"><path d="M8 0l2 5 6 1-4 4 1 6-5-3-5 3 1-6-4-4 6-1z" fill="#e8801c"/></svg>订单...</div>
<div class="tb" style="left:217px"><svg width="16" height="16"><circle cx="8" cy="9" r="7" fill="#1a9a9a"/><circle cx="8" cy="9" r="3.500" fill="#7fd04a"/></svg>Genesis</div>
<div class="tb" style="left:284px"><svg width="15" height="15"><use href="#xw"/></svg>Engin...</div>
<div class="tb" style="left:351px"><svg width="16" height="16"><rect x="1" y="1" width="14" height="14" fill="#1a1a9c"/><rect x="3" y="8" width="10" height="6" fill="#e03030"/><rect x="4" y="1" width="8" height="4" fill="#fff"/></svg>Total ...</div>
<div class="tb" style="left:418px"><svg width="15" height="15"><use href="#xw"/></svg>Progr...</div>
<div class="tb" style="left:485px"><svg width="16" height="16"><rect x="1" y="1" width="14" height="14" fill="#fce9c0" stroke="#d08a30"/><circle cx="8" cy="8" r="4.500" fill="none" stroke="#d08a30"/></svg>李仁...</div>
<div class="tb" style="left:552px"><svg width="16" height="16"><rect x="0" y="0" width="16" height="16" fill="#d9a0a0"/><circle cx="8" cy="8" r="6.500" fill="#14289c"/><path d="M6 3l4 1 2 4-4 4z" fill="#2a8a3a"/></svg>pcbn...</div>
<div class="tb" style="left:619px"><svg width="16" height="16"><rect x="2.500" y="1.500" width="11" height="14" fill="#fff" stroke="#222"/><path d="M5 5h6M5 8h6M5 11h6" stroke="#222"/></svg>8a9al...</div>
<div class="tb" style="left:686px;border-color:#404040 #fff #fff #404040;background:repeating-conic-gradient(#fff 0 25%,#d4d0c8 0 50%) 0 0/2px 2px;box-shadow:none"><svg width="15" height="15" style="left:4px;top:3px"><use href="#xw"/></svg>Grap...</div>
<div class="tb" style="left:753px"><svg width="15" height="15"><use href="#xw"/></svg>8a9al...</div>
<div class="tb" style="left:820px"><svg width="15" height="15"><use href="#xw"/></svg>8a9al...</div>
<div class="tb" style="left:887px"><svg width="16" height="16"><rect x=".5" y="1.500" width="14" height="13" fill="#f4c8a8" stroke="#b04a20"/><circle cx="6" cy="8" r="3.500" fill="#c03020"/><path d="M11 5h3M11 8h3M11 11h3" stroke="#555"/></svg>Micro...</div>
<div class="tb" style="left:954px"><svg width="16" height="16"><rect x="5.500" y="2.500" width="10" height="13" fill="#fff" stroke="#222"/><rect x="0" y="2" width="9" height="9" fill="#4a9a4a"/><path d="M2 4l5 5M7 4l-5 5" stroke="#fff"/></svg>CAM...</div>
<div class="tb" style="left:1021px"><svg width="16" height="16"><rect x="5.500" y="2.500" width="10" height="13" fill="#fff" stroke="#222"/><rect x="0" y="2" width="9" height="9" fill="#4a9a4a"/><path d="M2 4l5 5M7 4l-5 5" stroke="#fff"/></svg>8a9al...</div>
<div class="tb" style="left:1088px"><svg width="16" height="16"><rect width="16" height="16" fill="#111"/><path d="M0 6Q8 -2 16 3V0H0z" fill="#2aa83a"/><ellipse cx="8" cy="10" rx="7" ry="4" fill="#dde"/><circle cx="8" cy="10" r="3" fill="#334"/></svg>PKG2...</div>
<div class="tb" style="left:1155px"><svg width="16" height="16"><rect x=".5" y=".5" width="15" height="15" fill="#c4dcc4" stroke="#2a7a3a"/><path d="M4 4l8 8M12 4l-8 8" stroke="#2a7a3a" stroke-width="2"/></svg>Micro...</div>
<!-- tray -->
<div class="a" style="left:1236px;top:876px;width:201px;height:22px;border:1px solid;border-color:#808080 #fff #fff #808080"></div>
<svg class="a" style="left:1240px;top:878px" width="150" height="18">
<rect x="2" y="1" width="14" height="15" fill="#1a7a8a"/><path d="M0 16h16" stroke="#1c1c6c" stroke-width="2"/>
<path d="M19 9L27 2L34 9L27 16z" fill="#efe070" stroke="#333"/><path d="M23 9h7M25 6h4M25 12h4" stroke="#333"/>
<path d="M37 16L46 4L50 10L44 16z" fill="#d81818"/><path d="M46 16L50 10L56 16z" fill="#7ad87a"/>
<path d="M56 3L71 16M71 3L56 16" stroke="#6a1a8a" stroke-width="3"/>
<circle cx="78" cy="11" r="6" fill="none" stroke="#1a8a9a" stroke-width="2"/><rect x="76" y="3" width="4" height="10" fill="#e84020"/><rect x="76" y="0" width="4" height="4" fill="#edd040"/>
<rect x="90" y="1" width="16" height="16" fill="#00008a"/>
<rect x="108" y="1" width="14" height="14" fill="#30d040"/>
<rect x="126" y="1" width="15" height="16" fill="#8a8a60"/><circle cx="133.500" cy="9" r="5" fill="none" stroke="#ddd" stroke-width="2"/><path d="M133.500 6v3h3" stroke="#ddd" fill="none"/>
<text x="98" y="13" text-anchor="middle" font-size="11" fill="#fff" font-family="Liberation Sans,sans-serif">CH</text>
<text x="115" y="13" text-anchor="middle" font-size="13" font-weight="bold" fill="#fff" font-family="Liberation Sans,sans-serif">S</text>
</svg>
<div class="a" style="left:1400px;top:881px;font-size:11px;line-height:13px;color:#111">1:08</div>
</body></html>
